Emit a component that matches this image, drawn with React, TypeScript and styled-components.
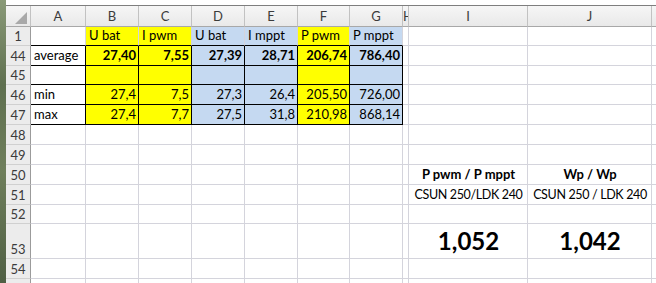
import React from "react";
import styled, { createGlobalStyle, css } from "styled-components";

type Fill = "yellow" | "blue";
type Align = "left" | "right" | "center";

interface CellData {
    text?: string;
    align?: Align;
    bold?: boolean;
    big?: boolean;
    tight?: boolean;
}

interface RowData {
    num: string;
    height: number;
    cells?: Record<string, CellData>;
}

const COLUMNS = ["A", "B", "C", "D", "E", "F", "G", "H", "I", "J", ""];
const WIDTHS = [25, 55, 53, 53, 53, 53, 52, 53, 6, 119, 124, 60];
const FILLS: Record<string, Fill> = { B: "yellow", C: "yellow", D: "blue", E: "blue", F: "yellow", G: "blue" };
const FILLED_ROWS = ["1", "44", "45", "46", "47"];
const BOXED_ROWS = ["44", "45", "46", "47"];
const BOXED_COLS = ["A", "B", "C", "D", "E", "F", "G"];

const num = (text: string, bold = false): CellData => ({ text, align: "right", bold });
const label = (text: string): CellData => ({ text, align: "left" });

const ROWS: RowData[] = [
    {
        num: "1",
        height: 19,
        cells: {
            B: label("U bat"),
            C: label("I pwm"),
            D: label("U bat"),
            E: label("I mppt"),
            F: label("P pwm"),
            G: label("P mppt"),
        },
    },
    {
        num: "44",
        height: 20,
        cells: {
            A: label("average"),
            B: num("27,40", true),
            C: num("7,55", true),
            D: num("27,39", true),
            E: num("28,71", true),
            F: num("206,74", true),
            G: num("786,40", true),
        },
    },
    { num: "45", height: 19 },
    {
        num: "46",
        height: 20,
        cells: {
            A: label("min"),
            B: num("27,4"),
            C: num("7,5"),
            D: num("27,3"),
            E: num("26,4"),
            F: num("205,50"),
            G: num("726,00"),
        },
    },
    {
        num: "47",
        height: 20,
        cells: {
            A: label("max"),
            B: num("27,4"),
            C: num("7,7"),
            D: num("27,5"),
            E: num("31,8"),
            F: num("210,98"),
            G: num("868,14"),
        },
    },
    { num: "48", height: 20 },
    { num: "49", height: 20 },
    {
        num: "50",
        height: 20,
        cells: {
            I: { text: "P pwm / P mppt", align: "center", bold: true },
            J: { text: "Wp / Wp", align: "center", bold: true },
        },
    },
    {
        num: "51",
        height: 20,
        cells: {
            I: { text: "CSUN 250/LDK 240", align: "center", tight: true },
            J: { text: "CSUN 250 / LDK 240", align: "center", tight: true },
        },
    },
    { num: "52", height: 19 },
    {
        num: "53",
        height: 35,
        cells: {
            I: { text: "1,052", align: "center", bold: true, big: true },
            J: { text: "1,042", align: "center", bold: true, big: true },
        },
    },
    { num: "54", height: 20 },
    { num: "", height: 20 },
];

const GlobalStyle = createGlobalStyle`
    html, body {
        margin: 0;
        padding: 0;
        background: #ffffff;
        overflow: hidden;
    }
`;

const App: React.FC = () => {
    return (
        <>
            <GlobalStyle />
            <Page>
                <DesktopEdge />
                <Sheet>
                    <FormulaEdge />
                    <Grid
                        $columns={WIDTHS.map((w) => `${w}px`).join(" ")}
                        $rows={["21px", ...ROWS.map((r) => `${r.height}px`)].join(" ")}
                    >
                        <Corner>
                            <svg width="14" height="13" viewBox="0 0 14 13">
                                <polygon points="13,0 13,12 1,12" fill="#a9a9a9" />
                            </svg>
                        </Corner>
                        {COLUMNS.map((c, i) => (
                            <ColHeader key={i} $clip={c === "H"}>
                                {c}
                            </ColHeader>
                        ))}
                        {ROWS.map((row, i) => (
                            <React.Fragment key={i}>
                                <RowHeader>{row.num}</RowHeader>
                                {COLUMNS.map((c, j) => {
                                    const cell = row.cells?.[c];
                                    const filled = FILLED_ROWS.includes(row.num) ? FILLS[c] : undefined;
                                    const boxed = BOXED_ROWS.includes(row.num) && BOXED_COLS.includes(c);
                                    const ruled = row.num === "1" && BOXED_COLS.includes(c);
                                    return (
                                        <Cell
                                            key={j}
                                            $fill={filled}
                                            $boxed={boxed}
                                            $ruled={ruled}
                                            $align={cell?.align ?? "left"}
                                            $bold={cell?.bold}
                                            $big={cell?.big}
                                            $tight={cell?.tight}
                                        >
                                            {cell?.text}
                                        </Cell>
                                    );
                                })}
                            </React.Fragment>
                        ))}
                    </Grid>
                </Sheet>
            </Page>
        </>
    );
};

const Page = styled.div`
    display: flex;
    width: 656px;
    height: 283px;
    overflow: hidden;
    font-family: Lato, "Liberation Sans", sans-serif;
`;

const DesktopEdge = styled.div`
    flex: 0 0 6px;
    background: linear-gradient(180deg, #8a9a78 0%, #5f7050 30%, #6f7f5c 60%, #4f5f44 100%);
`;

const Sheet = styled.div`
    flex: 1;
    min-width: 0;
    display: flex;
    flex-direction: column;
`;

const FormulaEdge = styled.div`
    flex: 0 0 5px;
    background: #ffffff;
    border-bottom: 1px solid #7e7e7e;
`;

const Grid = styled.div<{ $columns: string; $rows: string }>`
    display: grid;
    grid-template-columns: ${({ $columns }) => $columns};
    grid-template-rows: ${({ $rows }) => $rows};
    overflow: hidden;
`;

const HeaderBase = css`
    box-sizing: border-box;
    display: flex;
    align-items: center;
    justify-content: center;
    font-size: 13px;
    color: #3b3b3b;
    background: linear-gradient(180deg, #f6f6f6 0%, #e9e9e9 100%);
    border-right: 1px solid #c2c2c2;
    border-bottom: 1px solid #c2c2c2;
    overflow: hidden;
    white-space: nowrap;
`;

const Corner = styled.div`
    ${HeaderBase};
    align-items: flex-end;
    justify-content: flex-end;
    padding: 0 2px 1px 0;
    border-bottom-color: #a8a8a8;
`;

const ColHeader = styled.div<{ $clip?: boolean }>`
    ${HeaderBase};
    border-bottom-color: #a8a8a8;
    justify-content: ${({ $clip }) => ($clip ? "flex-start" : "center")};
`;

const RowHeader = styled.div`
    ${HeaderBase};
    align-items: flex-end;
    padding-bottom: 1px;
    background: #ececec;
    border-right-color: #9b9b9b;
    border-bottom-color: #d0d0d0;
`;

const FILL_COLORS: Record<Fill, string> = {
    yellow: "#ffff00",
    blue: "#c5d9f1",
};

const Cell = styled.div<{
    $fill?: Fill;
    $boxed?: boolean;
    $ruled?: boolean;
    $align: Align;
    $bold?: boolean;
    $big?: boolean;
    $tight?: boolean;
}>`
    box-sizing: border-box;
    display: flex;
    align-items: flex-end;
    justify-content: ${({ $align }) =>
        $align === "right" ? "flex-end" : $align === "center" ? "center" : "flex-start"};
    padding: 0 2px 2px 3px;
    background: ${({ $fill }) => ($fill ? FILL_COLORS[$fill] : "#ffffff")};
    border-right: 1px solid ${({ $boxed }) => ($boxed ? "#000000" : "#d4d4dc")};
    border-bottom: 1px solid ${({ $boxed, $ruled }) => ($boxed || $ruled ? "#000000" : "#d4d4dc")};
    font-size: ${({ $big, $tight }) => ($big ? "24px" : $tight ? "12.5px" : "13px")};
    letter-spacing: ${({ $tight }) => ($tight ? "-0.35px" : "normal")};
    font-weight: ${({ $bold }) => ($bold ? 700 : 400)};
    line-height: ${({ $big }) => ($big ? "26px" : "15px")};
    padding-bottom: ${({ $big }) => ($big ? "4px" : "2px")};
    color: #000000;
    white-space: nowrap;
    overflow: visible;
`;

export default App;
